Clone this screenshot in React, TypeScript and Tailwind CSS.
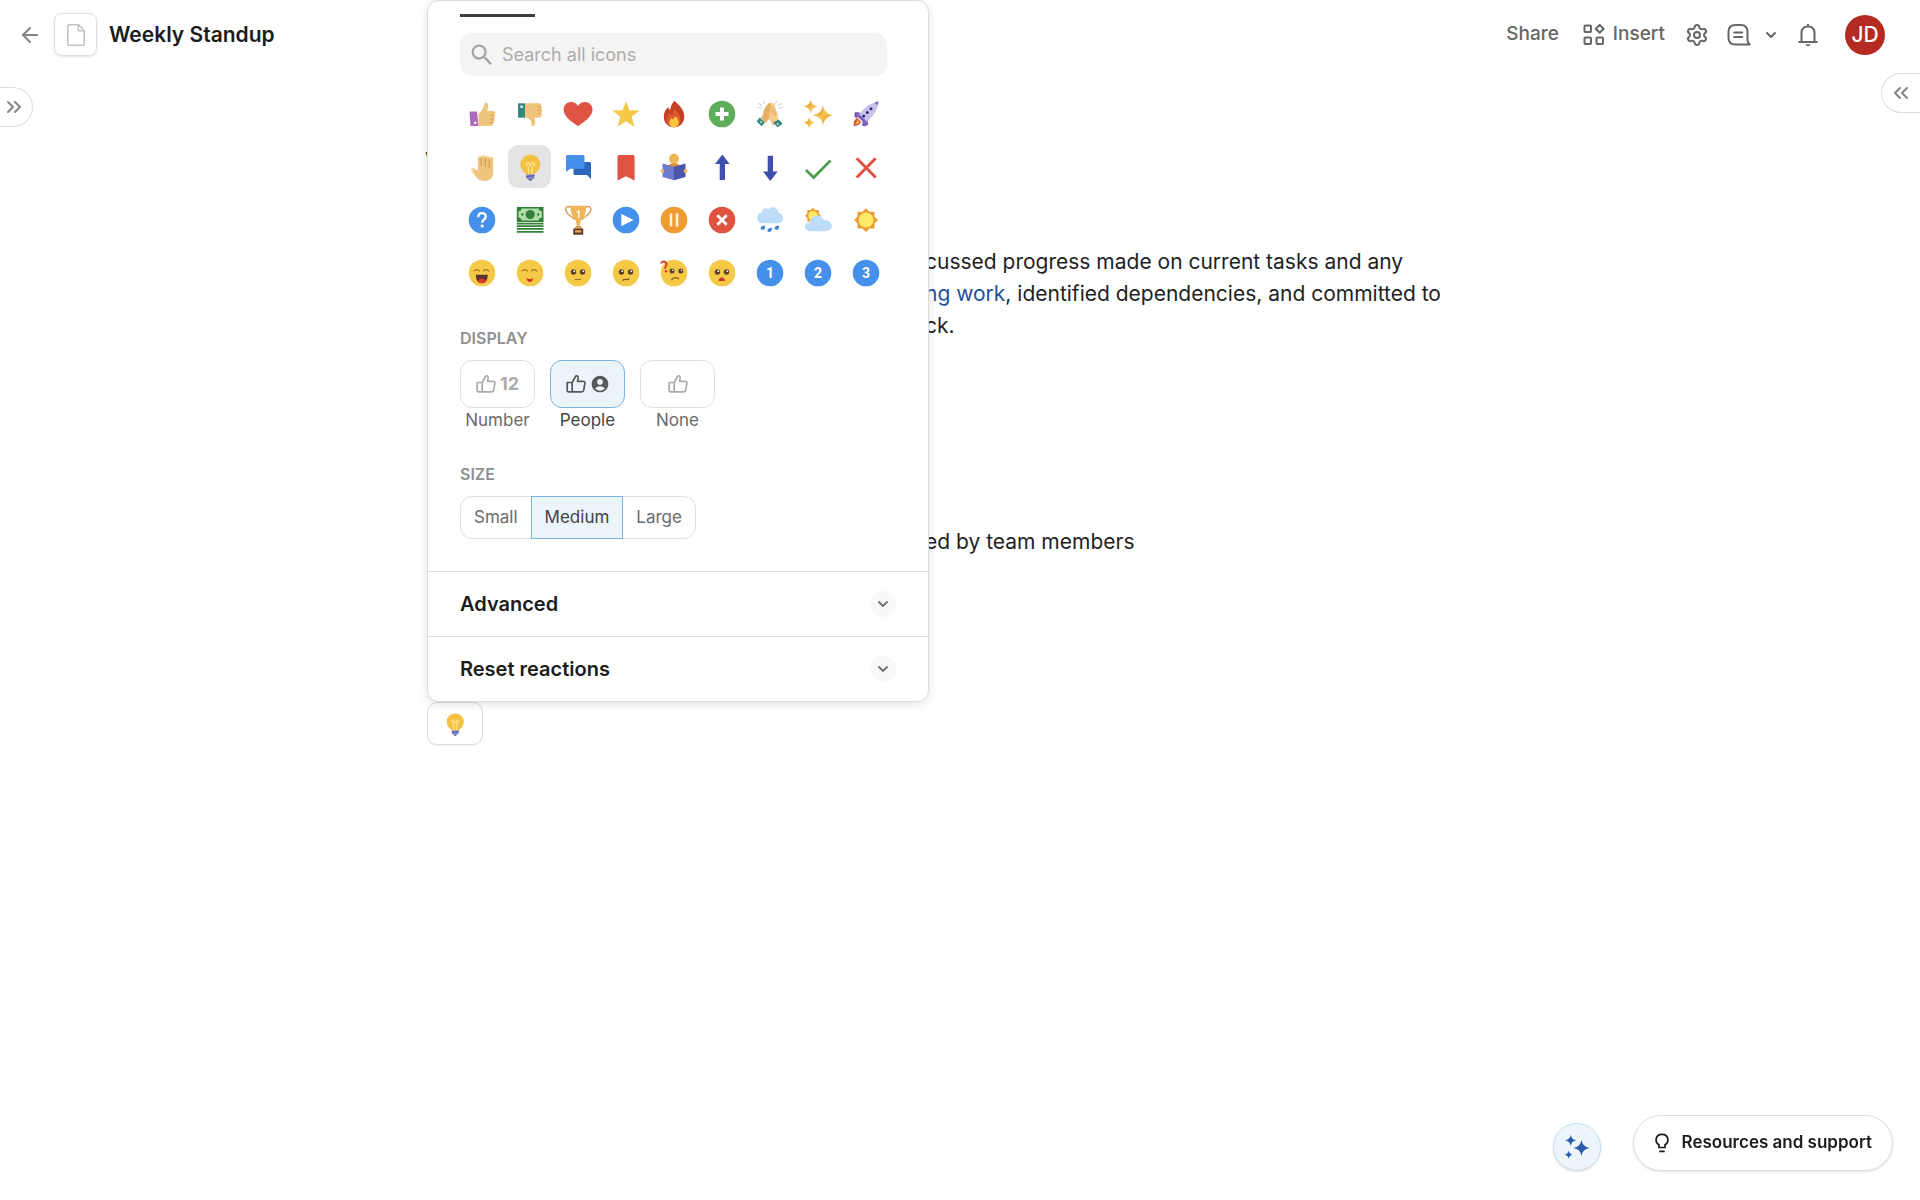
import type { ReactNode } from 'react';
import { useState } from 'react';

import clsx from 'clsx';
import { ArrowLeft, ChevronDown, ChevronsLeft, ChevronsRight, Settings } from 'lucide-react';
import { MdAccountCircle, MdSearch } from 'react-icons/md';

interface Reaction {
  name: string;
  art: ReactNode;
}

const Disc = ({ fill, children }: { fill: string; children?: ReactNode }) => (
  <>
    <circle cx="14" cy="14" r="13.3" fill={fill} />
    {children}
  </>
);

const DiscNumber = ({ value }: { value: string }) => (
  <Disc fill="#4590ea">
    <text x="14" y="19" textAnchor="middle" fontSize="14" fontWeight="700" fill="#fff" fontFamily="Roboto, sans-serif">
      {value}
    </text>
  </Disc>
);

const Eyes = ({ y = 13 }: { y?: number }) => (
  <>
    <circle cx="9.5" cy={y} r="2.7" fill="#5b402f" />
    <circle cx="18.5" cy={y} r="2.7" fill="#5b402f" />
    <circle cx="10.3" cy={y - 0.8} r="0.9" fill="#fff" />
    <circle cx="19.3" cy={y - 0.8} r="0.9" fill="#fff" />
  </>
);

const ClosedEyes = () => (
  <path d="M6.2 12q2.6-2.7 5.2 0M15.6 12q2.6-2.7 5.2 0" fill="none" stroke="#9b7222" strokeWidth="1.1" strokeLinecap="round" />
);

const bulb = (
  <>
    <circle cx="14.3" cy="11.5" r="10" fill="#f3c143" />
    <path d="M7.5 17.5h13.6l-2.6 4.2h-8.3z" fill="#f3c143" />
    <path
      d="M12.6 21.5v-7.8L10.4 12a1.6 1.6 0 1 1 2.9-1l1 1.3 1-1.3a1.6 1.6 0 1 1 2.9 1L16 13.7v7.8"
      fill="none"
      stroke="#fbe68b"
      strokeWidth="1.3"
    />
    <path d="M10.2 21.6h8.2v3.2l-2 1.7h-4.2l-2-1.7z" fill="#7b83c9" />
    <path d="m10.2 23.6 8.2-1" stroke="#535ba9" />
    <path d="M12.3 26.4h4l-2 1.6z" fill="#363d78" />
  </>
);

const reactions: Reaction[] = [
  {
    name: 'Thumbs up',
    art: (
      <>
        <path d="M1.5 11.5H9L10.5 26h-8z" fill="#ad6bbd" />
        <circle cx="7.3" cy="22.8" r="1.2" fill="#fff" />
        <path
          d="M10.5 13.5c3-1.5 4.3-4.3 5.2-7.4.8-3 2-4.1 3.3-3.4 1.7.9 1 4.9.2 8.3h5.6c3 0 3.4 3.3 1.4 4 1.5 1 1.2 3.2-.4 3.7 1.3 1.2.7 3.1-.8 3.5.8 1.8-.4 3.8-2.8 3.8H10.5z"
          fill="#f1c47e"
        />
        <path d="M22 15.3h4M22 19h4M21.5 22.5h3.7" stroke="#d69a4e" strokeWidth=".9" />
      </>
    ),
  },
  {
    name: 'Thumbs down',
    art: (
      <>
        <path d="M2 3.3h7v14.4H2z" fill="#36897a" />
        <circle cx="5.6" cy="6.7" r="1.3" fill="#fff" />
        <path
          d="M9 3.3h13.5c2.5 0 3.2 2 2.3 3.2 1.6.7 1.8 2.6.6 3.5 1.2 1 .8 2.8-.4 3.5 1.6 1.4.4 4.2-2 4.2h-4.4c1 3.3 1 8.3-1.2 8.3-2.6 0-1.3-3.7-3.1-5.8-1.3-1.6-3.3-1.8-5.3-3.2z"
          fill="#f1c47e"
        />
        <path d="M21.5 6.7h3.7M21.5 10.1h4M21.5 13.6h3.7" stroke="#d69a4e" strokeWidth=".9" />
      </>
    ),
  },
  {
    name: 'Heart',
    art: (
      <path
        d="M14 26.2C8 22.2-.4 16.5-.4 9.6-.4 5.2 2.9 2 7 2c3 0 5.6 1.6 7 4 1.4-2.4 4-4 7-4 4.1 0 7.5 3.2 7.5 7.6 0 6.9-8.5 12.6-14.5 16.6z"
        fill="#df5342"
      />
    ),
  },
  {
    name: 'Star',
    art: <path d="M14 1.3 17.4 10.2 27.6 10.5 19.7 16.7 22.5 26.8 14 21.2 5.5 26.8 8.3 16.7.4 10.5 10.6 10.2z" fill="#f5c846" />,
  },
  {
    name: 'Fire',
    art: (
      <>
        <path d="M14.5.8c5 4.6 9.8 9.5 9.8 15.7 0 6.5-4.5 10.7-10.3 10.7S3.8 23 3.8 16.7C3.8 12 6 9 8.4 7c.2 1.5.7 2.5 1.7 3C10.8 6.8 11.8 3.3 14.5.8z" fill="#c63f24" />
        <path d="M14 27.2c-4.5 0-7.3-2.8-7.3-7 0-3.5 1.8-5 3-7.2.8 1.3 1.8 2 2.8 2 .1-2.5.8-4.300 1.900-5.900 3.100 3 5.900 6.200 5.900 10.600 0 4.500-2.100 7.500-6.300 7.500z" fill="#df5a2c" />
        <path d="M14 27.2c-2.8 0-4.7-1.8-4.7-4.5 0-2 1-3 2-4.5l1.8 1.3 2.4-3.5c1.800 2.300 3.300 4.300 3.300 6.700 0 2.700-2 4.500-4.800 4.500z" fill="#f9c543" />
      </>
    ),
  },
  {
    name: 'Plus',
    art: (
      <Disc fill="#5dad5b">
        <path d="M14 7.5v13M7.5 14h13" stroke="#fff" strokeWidth="4" />
      </Disc>
    ),
  },
  {
    name: 'High five',
    art: (
      <>
        <path d="m3 3.5 2.7 2M2 7.3l3 .8M7.7 1.3l1 2.8M25.5 3.5l-3 2M26.7 7.3l-3.3.8M20.5 1.3l-1 2.8" stroke="#d5d5d2" strokeWidth="1.1" strokeLinecap="round" />
        <path d="M12.8 3.2c1.5-1.5 2.5-.5 2.5 1.3V17l-6.3 6-4-5 2-3.8c.3-4.3 2.4-7.5 5.8-11z" fill="#e6ad65" />
        <path d="M15.2 4.7c.4-2 2.5-2.3 3-.2l3 8.5c.8 2.4.4 5 1.3 7.5L17 26l-3.7-6.5c-.7-5 .6-10 1.9-14.8z" fill="#f5ca8a" />
        <path d="m16.5 6-1 7.5M18.5 9l-.8 5.5M20 12l-.5 4" stroke="#dfa35d" strokeWidth=".8" />
        <path d="m3.7 17.5 5.2 5-3.2 3.8-5-4.8z" fill="#33887b" />
        <path d="m22.7 19.5 3.8 4.2-4.7 3.6-4.8-4.5z" fill="#33887b" />
        <circle cx="5" cy="22" r=".9" fill="#d9eee9" />
        <circle cx="21.7" cy="24" r=".9" fill="#d9eee9" />
      </>
    ),
  },
  {
    name: 'Sparkles',
    art: (
      <>
        <path d="M19 5.5q1.3 7.8 9.7 9.8-8.4 2-9.7 9.9-1.3-7.9-9.7-9.9 8.4-2 9.7-9.8z" fill="#f5c451" />
        <path d="M6.7-.2Q7.6 5.3 13.3 6.5 7.6 7.8 6.7 13.2 5.8 7.8.2 6.5 5.8 5.3 6.7-.2z" fill="#f2bd4b" />
        <path d="M5.2 17.2q.8 4.4 5.3 5.5-4.5 1-5.3 5.500-.8-4.500-5.300-5.500 4.500-1 5.300-5.500z" fill="#f2bd4b" />
        <path d="M19 5.5v9.8H9.3q8.4-2 9.7-9.8zM28.7 15.3H19v9.9q1.3-7.9 9.7-9.9zM6.7-.2v6.7H.2Q5.8 5.3 6.7-.2zM5.2 17.2v5.5H0q4.4-1 5.2-5.5z" fill="#e59b36" opacity=".55" />
      </>
    ),
  },
  {
    name: 'Rocket',
    art: (
      <>
        <path d="M8 12.5 3.2 12q-2.2 3.5.4 6l5-1.5zM15.5 20l.8 4.5q-3.3 3-6.3 1l1.2-6z" fill="#7a62ba" />
        <path d="M24 2.5 25.7 4c.3 5.5-3.7 12-12.2 18.3L6.3 15.5C11.5 8 17.5 3 24 2.5z" fill="#cac2ec" />
        <path d="M22.5 2.7 26.5 1l-1 4.3zM7.7 14.5l6.8 6.8-2.5 1.5L5.8 17z" fill="#7a62ba" />
        <circle cx="19" cy="8.8" r="1.5" fill="#332b72" />
        <circle cx="15.3" cy="12.4" r="1.5" fill="#332b72" />
        <circle cx="11.7" cy="16" r="1.5" fill="#332b72" />
        <path d="M5 17.7 9.5 22.3 6 25.3 1.7 26.3 2 21z" fill="#df5342" />
        <path d="M5.5 20 8 22.5l-4.7 2z" fill="#f5c846" />
      </>
    ),
  },
  {
    name: 'Hand',
    art: (
      <>
        <path
          d="M9.8 5c0-2.600 3-2.600 3.200-.6.1-3.400 4-3.500 4.200-.3.6-2.500 4-2.300 4 .9.7-2.200 4-1.700 4 1.200v13c0 5.600-3.200 8.600-8.500 8.600-4.400 0-7.200-1.400-9.200-4.500l-4.200-5.700c-1-1.800 1.200-3 2.800-2l3.700 2.500z"
          fill="#f1c47e"
        />
        <path d="M13.2 5v8M17.3 5v9M21.3 6v8.5" stroke="#c99047" strokeWidth=".9" />
        <path d="M10.6 4.2q.8-1.2 1.7 0M14.3 3.2q.8-1.2 1.7 0M18.5 4q.8-1.2 1.7 0M3.7 17.7q1-1 2 0" stroke="#fff2dc" fill="none" strokeWidth="1.2" />
      </>
    ),
  },
  { name: 'Light bulb', art: bulb },
  {
    name: 'Chat',
    art: (
      <>
        <path d="M11 9h14.5q1.5 0 1.5 1.5V26l-4-4H11q-1.5 0-1.5-1.5v-10Q9.5 9 11 9z" fill="#2b65bc" />
        <path d="M3.5 2H19q1.5 0 1.5 1.5v10.7q0 1.5-1.5 1.5H6.5L2 19V3.5Q2 2 3.5 2z" fill="#4590ea" />
      </>
    ),
  },
  { name: 'Bookmark', art: <path d="M7.2 2h13.8q1.6 0 1.6 1.6v23.9L14 23.2l-8.5 4.3V3.6Q5.5 2 7.2 2z" fill="#df5342" /> },
  {
    name: 'Reading',
    art: (
      <>
        <circle cx="14" cy="5.7" r="4.9" fill="#f0b552" />
        <path d="M7 13q7-6 14 0v4H7z" fill="#d98f39" />
        <path d="m2.5 10.5 11.5 3.3v13.5L2.5 24z" fill="#6d79cb" />
        <path d="M25.5 10.5 14 13.8v13.5L25.5 24z" fill="#4a56aa" />
        <circle cx="2.5" cy="18" r="1.9" fill="#f0b552" />
        <circle cx="25.5" cy="18" r="1.9" fill="#f0b552" />
      </>
    ),
  },
  { name: 'Up arrow', art: <path d="M14.3 1.5 21.7 11H17v16h-5.3V11H7z" fill="#3f4fae" /> },
  { name: 'Down arrow', art: <path d="M14.3 28 21.7 18.5H17V2.7h-5.3v15.800H7z" fill="#3f4fae" /> },
  { name: 'Check', art: <path d="m2 17 7.700 7.500L26.500 7.500" fill="none" stroke="#4f9a4d" strokeWidth="2.7" /> },
  { name: 'Cross', art: <path d="m4.7 5.3 19 19.2M23.7 5.3l-19 19.2" stroke="#df5342" strokeWidth="3" /> },
  {
    name: 'Question',
    art: (
      <Disc fill="#4590ea">
        <path d="M10.3 11.2q0-4 3.8-4 3.7 0 3.7 3.4 0 1.6-1.9 3.1-1.7 1.4-1.7 3" fill="none" stroke="#fff" strokeWidth="2.3" />
        <circle cx="14.2" cy="20" r="1.6" fill="#fff" />
      </Disc>
    ),
  },
  {
    name: 'Money',
    art: (
      <>
        <path d="M.8 1h26.7v15H.8z" fill="#338038" />
        <path d="M5.5 2.5h17.3q0 2.7 3 2.7v6.600q-3 0-3 2.700H5.5q0-2.700-3-2.700V5.2q3 0 3-2.7z" fill="#afdda9" />
        <circle cx="14.2" cy="8.5" r="4.6" fill="#338038" />
        <circle cx="6.3" cy="8.5" r="1.2" fill="#338038" />
        <circle cx="22.2" cy="8.5" r="1.2" fill="#338038" />
        <path d="M.8 17.7h26.7M.8 20.2h26.7M.8 22.9h26.7M.8 25.900h26.700" stroke="#338038" strokeWidth="1.7" />
      </>
    ),
  },
  {
    name: 'Trophy',
    art: (
      <>
        <path d="M7 1.5C3.5-1 .8 1.5 2 5c1.2 4.3 5.6 4.8 8.5 8.7M21.5 1.5c3.5-2.5 6.2 0 5 3.5-1.2 4.3-5.6 4.8-8.5 8.7" fill="none" stroke="#d99d55" strokeWidth="1.4" />
        <path d="M6.5-.2h15.6q0 10.7-5.3 15L15.5 20h-2.5l-1.2-5.2q-5.3-4.3-5.3-15z" fill="#efb65e" />
        <path d="M12 20h4.700l2.300 3H9.7z" fill="#d99d55" />
        <path d="M9.3 22.7h9.900v6H9.3z" fill="#5b382a" />
        <path d="M11 24.3h6.5v2.2H11z" fill="#e9aa59" />
        <path d="m12.9 6.3 1.9-1.3v7" fill="none" stroke="#fff" strokeWidth="1.3" />
      </>
    ),
  },
  {
    name: 'Play',
    art: (
      <Disc fill="#4590ea">
        <path d="M9.3 7.8 21.5 14 9.3 20.3z" fill="#fff" />
      </Disc>
    ),
  },
  {
    name: 'Pause',
    art: (
      <Disc fill="#ef9b32">
        <path d="M11 7.5v13M17 7.5v13" stroke="#fff2dc" strokeWidth="2.5" />
      </Disc>
    ),
  },
  {
    name: 'Stop',
    art: (
      <Disc fill="#df5342">
        <path d="m9.3 9.3 9.4 9.4M18.7 9.3l-9.4 9.4" stroke="#fff" strokeWidth="2.7" />
      </Disc>
    ),
  },
  {
    name: 'Rain',
    art: (
      <>
        <path d="M6 17.2a5.3 5.3 0 0 1-.4-10.5C6 2.5 10 1.2 12.3 3.5c2.500-4 10-2.500 9.900 3.200 6.800.3 6.300 10.500 0 10.500z" fill="#bddcf8" />
        <path d="M9 19.5q.5 4.3-2.5 4.3-3-.7-1.3-3 1.5-1.3 3.8-1.3zM15.8 21.7q.5 4.3-2.5 4.3-3-.7-1.3-3 1.5-1.3 3.8-1.3zM23 19.5q.5 4.3-2.5 4.3-3-.7-1.3-3 1.5-1.3 3.8-1.3z" fill="#3e82d6" />
      </>
    ),
  },
  {
    name: 'Partly cloudy',
    art: (
      <>
        <path d="m9 1.8 2.3 2.3h3.4v3.4L17 9.8l-2.3 2.3v3.4h-3.4L9 17.8l-2.3-2.3H3.3v-3.4L1 9.8l2.3-2.3V4.1h3.4z" fill="#eb9d36" />
        <circle cx="9" cy="9.8" r="4.8" fill="#ffea68" />
        <path d="M6.2 25.2c-7-.3-7-8.5-.4-9 .9-7.9 11.5-9 14.2-1.9 10-.8 10.5 10.9 1.7 10.9z" fill="#bddcf8" />
      </>
    ),
  },
  {
    name: 'Sunny',
    art: (
      <>
        <path d="m14 2.3 3.5 3.5h5v5L26 14l-3.5 3.5v5h-5L14 26l-3.5-3.500h-5v-5L2 14l3.500-3.200v-5h5z" fill="#eb9d36" />
        <circle cx="14" cy="14" r="7.4" fill="#ffea68" />
      </>
    ),
  },
  {
    name: 'Laughing',
    art: (
      <Disc fill="#f5c846">
        <ClosedEyes />
        <path d="M7.8 15.7h12q0 8.5-6 8.5t-6-8.5z" fill="#5b352b" />
        <path d="M9.8 22q1-2.3 4-2.3t4 2.3q-1.5 2.2-4 2.2T9.8 22z" fill="#e0362b" />
      </Disc>
    ),
  },
  {
    name: 'Smiling',
    art: (
      <Disc fill="#f5c846">
        <ClosedEyes />
        <path d="M10.5 19.3q3.2 1.2 6.5 0-.3 3.6-3.2 3.6t-3.3-3.6z" fill="#c7352b" />
      </Disc>
    ),
  },
  {
    name: 'Neutral',
    art: (
      <Disc fill="#f5c846">
        <Eyes />
        <path d="M10.8 20.5h6.3" stroke="#a27325" />
      </Disc>
    ),
  },
  {
    name: 'Skeptical',
    art: (
      <Disc fill="#f5c846">
        <Eyes />
        <path d="M10.5 21.5q2-1.5 3.7-1t3.2-1" fill="none" stroke="#7b551f" strokeWidth="1.2" />
      </Disc>
    ),
  },
  {
    name: 'Confused',
    art: (
      <Disc fill="#f5c846">
        <circle cx="12" cy="12" r="2.5" fill="#5b402f" />
        <circle cx="20.8" cy="12" r="2.5" fill="#5b402f" />
        <circle cx="12.7" cy="11.2" r=".8" fill="#fff" />
        <circle cx="21.5" cy="11.2" r=".8" fill="#fff" />
        <path d="M11.5 21q2.8-4 7.5-1" fill="none" stroke="#7b551f" strokeWidth="1.2" />
        <path d="M1 4.5Q1.7 2 4.2 2.5T6.5 6Q4.5 7.7 5.2 9.7" fill="none" stroke="#df3c2c" strokeWidth="1.9" />
        <circle cx="6" cy="12.3" r="1.2" fill="#df3c2c" />
      </Disc>
    ),
  },
  {
    name: 'Worried',
    art: (
      <Disc fill="#f5c846">
        <Eyes />
        <path d="M10.5 22q.5-3.5 3.3-3.5T17.2 22z" fill="#c7352b" />
      </Disc>
    ),
  },
  { name: 'One', art: <DiscNumber value="1" /> },
  { name: 'Two', art: <DiscNumber value="2" /> },
  { name: 'Three', art: <DiscNumber value="3" /> },
];

const ThumbIcon = () => (
  <svg viewBox="0 0 20 20" className="h-5 w-5" fill="none" stroke="currentColor" strokeWidth="1.7" strokeLinejoin="round">
    <path d="M1.2 8.5h5v9.3H2.5q-1.3 0-1.3-1.3zM6.2 8.5 9.8 2q2.8-.5 2.3 2.5l-.6 2.8h5.7q2 0 1.7 1.9l-1.2 6.9q-.3 1.7-2 1.7H6.2z" />
  </svg>
);

const InsertIcon = () => (
  <svg viewBox="0 0 22 22" className="h-[22px] w-[22px]" fill="none" stroke="currentColor" strokeWidth="2">
    <rect x="1.5" y="1.5" width="6.5" height="6.5" rx="1" />
    <rect x="1.5" y="13.5" width="6.5" height="6.5" rx="1" />
    <rect x="13.5" y="13.5" width="6.5" height="6.5" rx="1" />
    <path d="m16.7.9 3.9 3.9-3.9 3.9-3.9-3.9z" strokeLinejoin="round" />
  </svg>
);

const CommentIcon = () => (
  <svg viewBox="0 0 24 24" className="h-6 w-6" fill="none" stroke="currentColor" strokeWidth="2" strokeLinecap="round" strokeLinejoin="round">
    <path d="M8.5 2h5.3q6.7 0 6.7 6.7v8.5q0 2 2.2 4.3H8.5Q1.5 21.5 1.5 15V8.7Q1.5 2 8.5 2z" />
    <path d="M7.2 9.5h8M7.2 14h8" />
  </svg>
);

const BellIcon = () => (
  <svg viewBox="0 0 22 24" className="h-6 w-[22px]" fill="none" stroke="currentColor" strokeWidth="2">
    <path d="M1.5 19h19M4.5 19V10q0-6.5 6.5-6.5T17.5 10v9M11 3.5V1" />
    <path d="M8.5 21.3h5q-.8 2-2.5 2t-2.5-2z" fill="currentColor" stroke="none" />
  </svg>
);

const displayModes = [
  { label: 'Number', extra: <span className="text-lg leading-5 font-bold">12</span> },
  { label: 'People', extra: <MdAccountCircle className="h-5 w-5" /> },
  { label: 'None', extra: null },
];

const sizes = ['Small', 'Medium', 'Large'];

const ReactionPicker = () => {
  const [selected, setSelected] = useState('Light bulb');
  const [display, setDisplay] = useState('People');
  const [size, setSize] = useState('Medium');

  return (
    <div className="absolute bottom-full left-0 w-[502px] rounded-xl border border-[#dcdcdc] bg-white shadow-[0_2px_10px_rgba(0,0,0,0.12)]">
      <div className="px-8 pt-[13px]">
        <div className="h-[3px] w-[75px] bg-[#3c4040]" />
        <label className="mt-4 flex h-[43px] w-[427px] items-center gap-1.5 rounded-xl bg-[#f4f4f4] pl-2">
          <MdSearch className="h-7 w-7 text-[#a5a5a5]" />
          <input
            type="search"
            aria-label="Search all icons"
            placeholder="Search all icons"
            className="min-w-0 flex-1 bg-transparent text-lg outline-none placeholder:text-[#acacac]"
          />
        </label>
        <div className="mt-4 grid w-max grid-cols-9 gap-x-[5px] gap-y-2.5">
          {reactions.map(({ name, art }) => (
            <button
              key={name}
              aria-label={name}
              onClick={() => setSelected(name)}
              className={clsx('flex h-[43px] w-[43px] items-center justify-center rounded-[10px]', selected === name && 'bg-[#e4e4e4]')}
            >
              <svg viewBox="0 0 28 28" className="h-7 w-7 overflow-visible">
                {art}
              </svg>
            </button>
          ))}
        </div>

        <h3 className="mt-8 text-base leading-6 font-semibold text-[#8f8f8f]">DISPLAY</h3>
        <div className="mt-2.5 flex gap-[15px]">
          {displayModes.map(({ label, extra }) => (
            <button
              key={label}
              onClick={() => setDisplay(label)}
              className={clsx('flex flex-col items-center text-[17px] leading-6', display === label ? 'text-[#3f4446]' : 'text-[#6b6b6b]')}
            >
              <span
                className={clsx(
                  'flex h-12 w-[75px] items-center justify-center gap-1 rounded-xl border',
                  display === label ? 'border-[#7ab2e4] bg-[#ebf4f8] text-[#55595b]' : 'border-[#dfdfdf] text-[#acacac]'
                )}
              >
                <ThumbIcon />
                {extra}
              </span>
              {label}
            </button>
          ))}
        </div>

        <h3 className="mt-[30px] text-base leading-6 font-semibold text-[#8f8f8f]">SIZE</h3>
        <div className="mt-2.5 flex">
          {sizes.map(label => (
            <button
              key={label}
              onClick={() => setSize(label)}
              className={clsx(
                'h-[43px] border px-[13px] text-[17px] not-first:-ml-px first:rounded-l-xl last:rounded-r-xl',
                size === label ? 'relative border-[#7ab2e4] bg-[#ebf4f8] text-[#3f4446]' : 'border-[#dfdfdf] text-[#6b6b6b]'
              )}
            >
              {label}
            </button>
          ))}
        </div>
      </div>
      <div className="mt-8">
        {['Advanced', 'Reset reactions'].map(title => (
          <button
            key={title}
            className="flex h-[65px] w-full items-center justify-between border-t border-[#dcdcdc] px-8 text-xl font-semibold text-[#1c1c1c]"
          >
            {title}
            <span className="flex h-[26px] w-[26px] items-center justify-center rounded-full bg-[#f8f8f8]">
              <ChevronDown className="h-4 w-4 text-[#777]" strokeWidth={3} />
            </span>
          </button>
        ))}
      </div>
    </div>
  );
};

const Header = () => (
  <header className="flex h-[69px] items-center justify-between pr-[35px] pl-[18px] text-[#666]">
    <div className="flex items-center">
      <button aria-label="Back">
        <ArrowLeft className="h-6 w-6 text-[#858585]" />
      </button>
      <button
        aria-label="Page icon"
        className="ml-3 flex h-[43px] w-[43px] items-center justify-center rounded-lg border border-[#dfdfdf] shadow-sm"
      >
        <svg viewBox="0 0 18 22" className="h-[22px] w-[18px]" fill="none" stroke="#c2c2c2" strokeWidth="1.5" strokeLinejoin="round">
          <path d="M2 .8h9.5l5.7 5.7V20q0 1.2-1.2 1.2H2Q.8 21.2.8 20V2Q.8.8 2 .8zM11.3.8v6h6" />
        </svg>
      </button>
      <h1 className="ml-3 text-[21px] font-semibold text-[#1c1c1c]">Weekly Standup</h1>
    </div>
    <div className="flex items-center text-[19px] font-medium">
      <button>Share</button>
      <button className="ml-6 flex items-center gap-2">
        <InsertIcon />
        Insert
      </button>
      <button aria-label="Settings" className="ml-5">
        <Settings className="h-6 w-6" />
      </button>
      <button aria-label="Comments" className="ml-[18px]">
        <CommentIcon />
      </button>
      <button aria-label="Comment options" className="ml-3">
        <ChevronDown className="h-4 w-4" strokeWidth={3} />
      </button>
      <button aria-label="Notifications" className="ml-[18px]">
        <BellIcon />
      </button>
      <button className="ml-[26px] h-10 w-10 rounded-full bg-[#b52b22] text-[21px] text-white">JD</button>
    </div>
  </header>
);

const App = () => (
  <div className="relative min-h-screen bg-white font-['Inter',sans-serif] text-[#1f1f1f]">
    <Header />
    <button
      aria-label="Open outline"
      className="absolute top-[87px] left-0 flex h-10 w-[33px] items-center rounded-r-full border border-l-0 border-[#dedede] pl-0.5 text-[#858585]"
    >
      <ChevronsRight className="h-6 w-6" />
    </button>
    <button
      aria-label="Open comments"
      className="absolute top-[73px] right-0 flex h-10 w-[39px] items-center rounded-l-full border border-r-0 border-[#dedede] pl-[7px] text-[#858585]"
    >
      <ChevronsLeft className="h-6 w-6" />
    </button>

    <main className="mx-auto max-w-[1070px] pt-[76px]">
      <h2 className="text-[32px] leading-10 font-semibold">Weekly Standup</h2>
      <p className="mt-[61px] pl-[500px] text-[21px] leading-8">
        cussed progress made on current tasks and any
        <br />
        <a href="#work" className="text-[#23509c]">
          ng work
        </a>
        , identified dependencies, and committed to
        <br />
        ck.
      </p>
      <p className="mt-[184px] pl-[500px] text-[21px] leading-8">ed by team members</p>
      <div className="relative mt-[144px] ml-0.5 w-max">
        <button
          aria-label="Light bulb reaction"
          className="flex h-[43px] w-[56px] items-center justify-center rounded-[10px] border border-[#dcdcdc] bg-white shadow-xs"
        >
          <svg viewBox="0 0 28 28" className="h-6 w-6">
            {bulb}
          </svg>
        </button>
        <ReactionPicker />
      </div>
    </main>

    <div className="fixed right-[27px] bottom-[29px] flex items-end gap-8">
      <button
        aria-label="Assistant"
        className="flex h-12 w-12 items-center justify-center rounded-full border border-[#c5dff4] bg-[#ebf5fa] shadow-sm"
      >
        <svg viewBox="0 0 26 26" className="h-[26px] w-[26px]" fill="#2b5ca8">
          <path d="M17.5 6q1 6.800 8 8-7 1.200-8 8-1-6.800-8-8 7-1.200 8-8zM6.700.7q.7 4.800 5.600 5.600-4.900.8-5.600 5.600Q6 7.100 1 6.300 6 5.500 6.700.7zM4.700 16.500q.5 3.500 4 4.200-3.500.6-4 4.200-.5-3.600-4.200-4.200 3.700-.7 4.200-4.200z" />
        </svg>
      </button>
      <button className="flex h-14 items-center gap-3 rounded-full border border-[#dedede] bg-white px-5 text-[17px] font-semibold text-[#1c1c1c] shadow-sm">
        <svg viewBox="0 0 16 20" className="h-5 w-4" fill="none" stroke="currentColor" strokeWidth="1.7">
          <path d="M5 14.5v-2.7C.6 9.5 1 1.3 8 1.3s7.4 8.2 3 10.5v2.7zM5.3 18.3h5.4" />
        </svg>
        Resources and support
      </button>
    </div>
  </div>
);

export default App;
